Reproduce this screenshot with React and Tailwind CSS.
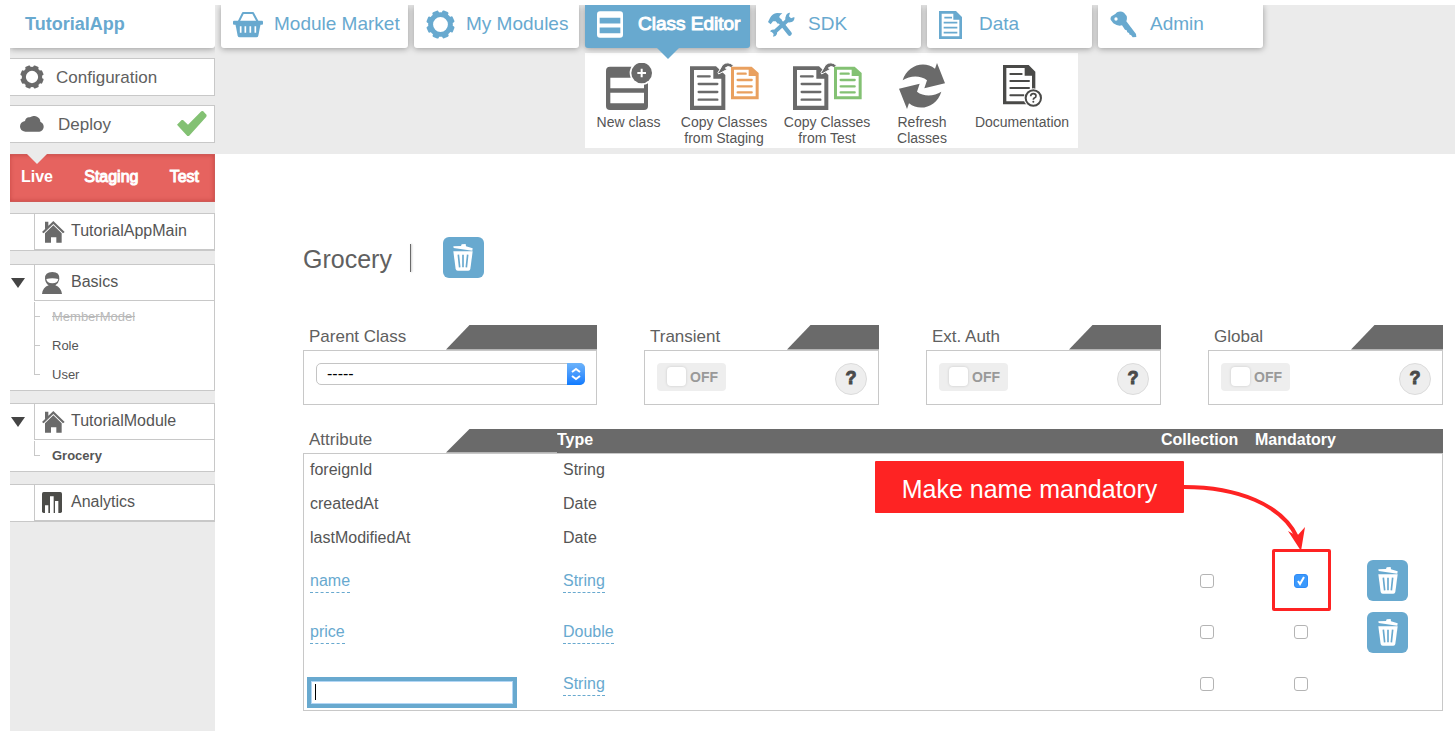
import { useState } from 'react';

const TABS = [
  { label: 'Module Market', icon: BasketIcon, width: 'w-[187px]', gap: 'gap-[11px]' },
  { label: 'My Modules', icon: GearIcon, width: 'w-[165px]', gap: 'gap-[11px]' },
  { label: 'Class Editor', icon: ClassIcon, width: 'w-[165px]', gap: 'gap-[15px]', active: true },
  { label: 'SDK', icon: ToolsIcon, width: 'w-[165px]', gap: 'gap-[13px]' },
  { label: 'Data', icon: DataIcon, width: 'w-[165px]', gap: 'gap-[17px]' },
  { label: 'Admin', icon: KeyIcon, width: 'w-[165px]', gap: 'gap-[13px]' },
];

const ACTIONS = [
  { lines: ['New class'], icon: NewClassIcon, width: 'w-[87px]' },
  { lines: ['Copy Classes', 'from Staging'], icon: CopyStagingIcon, width: 'w-[104px]' },
  { lines: ['Copy Classes', 'from Test'], icon: CopyTestIcon, width: 'w-[102px]' },
  { lines: ['Refresh', 'Classes'], icon: RefreshIcon, width: 'w-[88px]' },
  { lines: ['Documentation'], icon: DocumentationIcon, width: 'w-[112px]' },
];

const MODULES = [
  { name: 'TutorialAppMain', icon: HouseIcon, margin: 'mt-[11px]' },
  {
    name: 'Basics',
    icon: PersonIcon,
    margin: 'mt-[13px]',
    classes: [
      { name: 'MemberModel', style: 'text-[#b9b9b9] line-through' },
      { name: 'Role', style: 'text-[#555]' },
      { name: 'User', style: 'text-[#555]' },
    ],
  },
  {
    name: 'TutorialModule',
    icon: HouseIcon,
    margin: 'mt-3',
    classes: [{ name: 'Grocery', style: 'font-bold text-[#555]' }],
  },
  { name: 'Analytics', icon: AnalyticsIcon, margin: 'mt-3' },
];

const SYSTEM_ATTRIBUTES = [
  { name: 'foreignId', type: 'String' },
  { name: 'createdAt', type: 'Date' },
  { name: 'lastModifiedAt', type: 'Date' },
];

/* ---------- icons ---------- */

function BasketIcon() {
  return (
    <svg width="30" height="27" viewBox="0 0 90 81" fill="none" aria-hidden>
      <path d="M16 34 30 6h30l15 28" stroke="#68a9cf" strokeWidth="6" strokeLinejoin="round" />
      <rect y="29" width="90" height="12" rx="3" fill="#68a9cf" />
      <path d="M7 38h76l-7 36q-1 5-6 5H20q-5 0-6-5z" fill="#68a9cf" />
      <path d="M23 46v19M37 46v19M52 46v19M67 46v19" stroke="#fff" strokeWidth="5" />
    </svg>
  );
}

function Gear({ size, color }) {
  return (
    <svg width={size} height={size} viewBox="-44 -44 88 88" aria-hidden>
      {[22, 67, 112, 157, 202, 247, 292, 337].map((a) => (
        <rect key={a} x="-10" y="-43" width="20" height="16" rx="4" fill={color} transform={`rotate(${a})`} />
      ))}
      <circle r="30" fill="none" stroke={color} strokeWidth="15" />
    </svg>
  );
}

function GearIcon() {
  return <Gear size={29} color="#68a9cf" />;
}

function ClassIcon() {
  return (
    <svg width="26" height="27" viewBox="0 0 78 80" aria-hidden>
      <rect width="78" height="80" rx="9" fill="#fff" />
      <path d="M8 20h62v17H8zM8 49h62v17H8z" fill="#68a9cf" />
    </svg>
  );
}

function ToolsIcon() {
  return (
    <svg width="27" height="26" viewBox="0 0 81 78" fill="none" aria-hidden>
      <path d="M62 22 19 61" stroke="#68a9cf" strokeWidth="12" />
      <path d="M55 8Q60 1 66 2L63 13 69 19 79 15Q81 26 71 30 59 34 53 26 50 17 55 8z" fill="#68a9cf" />
      <path d="M6 58Q10 51 19 53 29 57 27 66 24 74 15 74L17 66 12 61z" fill="#68a9cf" />
      <path d="M34 26 65 65" stroke="#68a9cf" strokeWidth="13" strokeLinecap="round" />
      <path d="M0 30 6 18Q13 5 27 3L43 4 37 9Q32 13 35 18L42 24 30 36 23 28 15 28 8 37z" fill="#68a9cf" />
    </svg>
  );
}

function DataIcon() {
  return (
    <svg width="23" height="28" viewBox="0 0 69 84" aria-hidden>
      <path d="M0 0h51l18 18v66H0zM8 8v68h53V26H43V8z" fill="#68a9cf" fillRule="evenodd" />
      <path d="M16 20h23M14 35h41M14 50h41M14 65h41" stroke="#68a9cf" strokeWidth="5" />
    </svg>
  );
}

function KeyIcon() {
  return (
    <svg width="27" height="27" viewBox="0 0 81 81" aria-hidden>
      <path
        d="M21 4Q32-2 42 5L50 15Q52 23 49 31L78 69 79 78 68 79 63 72 59 71 57 66 52 64 50 58 45 56 36 43Q24 47 10 37L2 26Q0 17 7 14 15 12 21 4z"
        fill="#68a9cf"
      />
      <circle cx="18" cy="24" r="5" fill="#fff" />
    </svg>
  );
}

function NewClassIcon() {
  return (
    <svg width="46" height="47" viewBox="0 0 138 141" aria-hidden>
      <rect y="11" width="126" height="130" rx="12" fill="#6a6a6a" />
      <path d="M13 44h101v32H13zM13 89h101v32H13z" fill="#fff" />
      <circle cx="107" cy="30" r="36" fill="#fff" />
      <circle cx="107" cy="30" r="31" fill="#6a6a6a" />
      <path d="M107 17v26M94 30h26" stroke="#fff" strokeWidth="6" />
    </svg>
  );
}

function CopyIcon({ color }) {
  return (
    <svg width="69" height="48" viewBox="0 0 207 144" aria-hidden>
      <path d="M0 13h78l28 26v105H0zM12 24v107h82V50H70V24z" fill="#6a6a6a" fillRule="evenodd" />
      <path d="M24 43h35M26 66h56M26 90h56M26 113h56" stroke="#6a6a6a" strokeWidth="7" strokeLinecap="round" />
      <path d="M84 32 98 8Q114-4 130 10L124 17Q114 10 106 18L112 22 86 36z" fill="#6a6a6a" stroke="#fff" strokeWidth="3" />
      <path d="M123 14h62l21 19v79h-83zM132 23v80h65V42h-21V23z" fill={color} fillRule="evenodd" />
      <path d="M143 35h24M143 54h42M143 73h42M143 91h42" stroke={color} strokeWidth="7" strokeLinecap="round" />
    </svg>
  );
}

function CopyStagingIcon() {
  return <CopyIcon color="#e9a05f" />;
}

function CopyTestIcon() {
  return <CopyIcon color="#83c173" />;
}

function RefreshIcon() {
  const arrow = 'M11 52C24 8 74-10 108 17L114 0 138 61 76 76 84 52C64 36 32 38 11 52z';
  return (
    <svg width="46" height="46" viewBox="0 0 138 138" fill="#6a6a6a" aria-hidden>
      <path d={arrow} />
      <path d={arrow} transform="rotate(180 69 69)" />
    </svg>
  );
}

function DocumentationIcon() {
  return (
    <svg width="39" height="42" viewBox="0 0 117 126" aria-hidden>
      <path d="M0 0h77l20 20v98H0zM10 9v100h77V32H65V9z" fill="#4a4a48" fillRule="evenodd" />
      <path d="M22 27h34M22 48h56M22 69h56M22 91h40" stroke="#4a4a48" strokeWidth="6" strokeLinecap="round" />
      <circle cx="91" cy="99" r="29" fill="#fff" />
      <circle cx="91" cy="99" r="23" fill="#fff" stroke="#4a4a48" strokeWidth="6" />
      <path d="M83 94q0-8 8-8t8 7q0 4-5 6-3 2-3 5" fill="none" stroke="#4a4a48" strokeWidth="5" />
      <circle cx="91" cy="110" r="3" fill="#4a4a48" />
    </svg>
  );
}

function CloudIcon() {
  return (
    <svg width="24" height="16" viewBox="0 0 72 48" fill="#6a6a6a" aria-hidden>
      <path d="M16 47Q0 46 0 31 1 18 15 15 18 2 30 4 40-3 51 2 61 7 61 17 72 22 71 34 69 46 58 47z" />
    </svg>
  );
}

function CheckIcon() {
  return (
    <svg width="30" height="26" viewBox="0 0 90 78" fill="#83c173" aria-hidden>
      <path d="M0 41 14 27 18 27 33 41 73 1 78 0 89 12 88 17 36 75 31 75z" />
    </svg>
  );
}

function HouseIcon() {
  return (
    <svg width="23" height="22" viewBox="0 0 69 66" fill="#6a6a6a" aria-hidden>
      <path d="M9 2h10v13L9 24zM0 33 34 0 68 33 63 37 34 9 5 37z" />
      <path d="M34 13 59 37v28H43V49H27v16H9V37z" />
    </svg>
  );
}

function PersonIcon() {
  return (
    <svg width="20" height="22" viewBox="0 0 60 66" aria-hidden>
      <path d="M9 20Q8 0 31 0 54 0 52 22 50 34 40 40 57 46 60 66H0Q2 46 20 40 10 33 9 20z" fill="#6a6a6a" />
      <path d="M13 21Q31 17 49 21 47 34 31 34 15 34 13 21z" fill="#fff" />
    </svg>
  );
}

function AnalyticsIcon() {
  return (
    <svg width="20" height="21" viewBox="0 0 60 63" aria-hidden>
      <rect width="60" height="63" rx="5" fill="#4c4c49" />
      <path d="M9 40h10v23H9zM24 13h11v50H24zM39 27h10v36H39z" fill="#fff" />
    </svg>
  );
}

function TrashIcon() {
  return (
    <svg width="20" height="27" viewBox="0 0 60 81" aria-hidden>
      <path d="M1 7 24 6 26 1 38 0 39 7 59 13 58 20 2 12z" fill="#fff" />
      <path d="M1 22h58l-7 53q-1 5-6 5H14q-5 0-6-5z" fill="#fff" />
      <path d="M16 32l4 38M30 32v38M44 32l-4 38" stroke="#68a9cf" strokeWidth="5" />
    </svg>
  );
}

/* ---------- header ---------- */

function Tab({ tab }) {
  const Icon = tab.icon;
  return (
    <a
      href="#"
      className={`relative flex h-[43px] shrink-0 items-center rounded-b-[3px] pb-1 pl-3 text-[19px] shadow-[0_1px_6px_rgba(0,0,0,0.35)] ${tab.width} ${tab.gap} ${
        tab.active ? 'bg-[#68a9cf] text-white [-webkit-text-stroke:1px_white]' : 'bg-white text-[#68a9cf]'
      }`}
    >
      <Icon />
      <span className="whitespace-nowrap">{tab.label}</span>
      {tab.active && (
        <svg className="absolute top-[42px] left-[71px] z-10" width="24" height="12" aria-hidden>
          <path d="M0 0h24L12 12z" fill="#68a9cf" />
        </svg>
      )}
    </a>
  );
}

function Header() {
  return (
    <header className="h-[149px] overflow-hidden bg-[#ebebeb]">
      <nav className="relative z-10 flex gap-[6px] pl-[6px]">
        {TABS.map((tab) => (
          <Tab key={tab.label} tab={tab} />
        ))}
      </nav>
      <div className="mt-[5px] ml-[370px] flex h-[95px] w-fit bg-white">
        {ACTIONS.map(({ lines, icon: Icon, width }) => (
          <button key={lines.join(' ')} className={`flex flex-col items-center pt-[9px] ${width}`}>
            <span className="flex h-[52px] items-center pb-1">
              <Icon />
            </span>
            {lines.map((line) => (
              <span key={line} className="text-[14px] leading-[16px] text-[#555]">
                {line}
              </span>
            ))}
          </button>
        ))}
      </div>
    </header>
  );
}

/* ---------- sidebar ---------- */

function ModuleBox({ module }) {
  const Icon = module.icon;
  return (
    <section className={`border border-l-0 border-[#c8c8c8] bg-white ${module.margin}`}>
      <div className="flex">
        <div className="flex w-6 items-center pl-px">
          {module.classes && (
            <button aria-label={`Collapse ${module.name}`}>
              <svg width="14" height="10" aria-hidden>
                <path d="M0 0h14L7 10z" fill="#444" />
              </svg>
            </button>
          )}
        </div>
        <a href="#" className="flex h-9 flex-1 items-center border-b border-l border-[#c8c8c8] pl-[7px] text-[16px] text-[#555]">
          <span className="flex w-[29px]">
            <Icon />
          </span>
          <span className="pb-[2px]">{module.name}</span>
        </a>
      </div>
      {module.classes && (
        <ul className="py-px pl-6">
          {module.classes.map((cls, i) => (
            <li key={cls.name} className="flex h-[29px] items-center">
              <span className="flex w-[6px] flex-col self-stretch">
                <span className="h-1/2 border-b border-l border-[#c8c8c8]" />
                {i < module.classes.length - 1 && <span className="h-1/2 border-l border-[#c8c8c8]" />}
              </span>
              <a href="#" className={`pl-3 text-[13px] ${cls.style}`}>
                {cls.name}
              </a>
            </li>
          ))}
        </ul>
      )}
    </section>
  );
}

function Sidebar() {
  return (
    <aside className="w-[205px] shrink-0 overflow-hidden bg-[#ebebeb]">
      <a
        href="#"
        className="flex h-[43px] items-center rounded-br-[3px] bg-white pb-1 pl-[15px] text-[18px] font-bold text-[#68a9cf] shadow-[0_1px_6px_rgba(0,0,0,0.35)]"
      >
        TutorialApp
      </a>
      <a href="#" className="mt-[10px] flex h-[38px] items-center border border-l-0 border-[#c8c8c8] bg-white pl-[10px] text-[17px] text-[#606060]">
        <span className="flex w-9">
          <Gear size={24} color="#6a6a6a" />
        </span>
        <span className="pt-[2px]">Configuration</span>
      </a>
      <a href="#" className="mt-[9px] flex h-[38px] items-center border border-l-0 border-[#c8c8c8] bg-white pl-[10px] text-[17px] text-[#606060]">
        <span className="flex w-[38px]">
          <CloudIcon />
        </span>
        <span className="flex-1 pt-[2px]">Deploy</span>
        <span className="pr-[7px]">
          <CheckIcon />
        </span>
      </a>

      <nav className="relative mt-[11px] flex h-12 items-center justify-between border border-l-0 border-[#cf5a57] bg-[#e6635f] pr-[15px] pb-[3px] pl-[11px] text-[16px] text-white shadow-[inset_0_0_4px_rgba(120,0,0,0.3)]">
        <svg className="absolute -top-px left-[17px]" width="20" height="10" aria-hidden>
          <path d="M0 0h20L10 10z" fill="#ebebeb" />
        </svg>
        <a href="#" className="font-bold">Live</a>
        <a href="#" className="[-webkit-text-stroke:1px_white]">Staging</a>
        <a href="#" className="[-webkit-text-stroke:1px_white]">Test</a>
      </nav>

      {MODULES.map((module) => (
        <ModuleBox key={module.name} module={module} />
      ))}
    </aside>
  );
}

/* ---------- class editor ---------- */

function DeleteButton({ label }) {
  return (
    <button aria-label={label} className="flex size-[41px] items-center justify-center rounded-[6px] bg-[#68a9cf]">
      <TrashIcon />
    </button>
  );
}

function Card({ title, htmlFor, children }) {
  return (
    <section>
      <div className="flex h-[25px]">
        <label htmlFor={htmlFor} className="w-[143px] pl-[6px] text-[17px] leading-6 text-[#606060]">
          {title}
        </label>
        <div className="flex-1 bg-[#6a6a6a] [clip-path:polygon(24px_0,100%_0,100%_100%,0_100%)]" />
      </div>
      <div className="flex h-[55px] items-start justify-between border border-[#c8c8c8] pt-3 pr-[11px] pl-3">{children}</div>
    </section>
  );
}

function SwitchCard({ title, id }) {
  const [on, setOn] = useState(false);
  return (
    <Card title={title} htmlFor={id}>
      <div className="flex h-7 w-[69px] items-center gap-1 rounded-[4px] bg-[#eee] pl-[10px]">
        <input
          id={id}
          type="checkbox"
          checked={on}
          onChange={() => setOn(!on)}
          className="size-[19px] appearance-none rounded-[4px] bg-white shadow-[0_0_3px_rgba(0,0,0,0.15)]"
        />
        <span className="text-[14px] leading-7 font-bold text-[#999]">{on ? 'ON' : 'OFF'}</span>
      </div>
      <button
        aria-label={`Help on ${title}`}
        className="flex size-8 items-center justify-center rounded-full border border-[#dcdcdc] bg-[#eee] text-[18px] font-bold text-[#4a4a4a] [-webkit-text-stroke:1px_#4a4a4a]"
      >
        ?
      </button>
    </Card>
  );
}

function Tick({ label, defaultChecked }) {
  return (
    <span className="relative flex justify-center">
      <input
        type="checkbox"
        aria-label={label}
        defaultChecked={defaultChecked}
        className="peer size-[14px] appearance-none rounded-[3px] border border-[#b4b4b4] bg-white checked:border-[#2f8bf7] checked:bg-[#3b99fc]"
      />
      <svg className="pointer-events-none absolute top-0 hidden peer-checked:block" width="14" height="14" aria-hidden>
        <path d="M4 7l2 3 4-7" fill="none" stroke="#fff" strokeWidth="2" />
      </svg>
    </span>
  );
}

function Editable({ children }) {
  return (
    <a href="#" className="inline-block border-b border-dashed border-[#68a9cf] leading-[22px] text-[#68a9cf]">
      {children}
    </a>
  );
}

// Text box for the next attribute; the caret is shown while the box is empty
function NewAttributeInput() {
  const [name, setName] = useState('');
  return (
    <div className="mb-[2px] ml-[3px] flex h-[31px] w-[210px] items-center border-4 border-[#68a9cf] bg-white pl-1 shadow-[inset_0_0_0_1px_#b3d6f5]">
      {name === '' && <span className="h-4 w-px bg-black" />}
      <input
        aria-label="New attribute name"
        value={name}
        onChange={(e) => setName(e.target.value)}
        className="min-w-0 flex-1 bg-transparent outline-none"
      />
    </div>
  );
}

function AttributeTable() {
  return (
    <table className="w-full table-fixed border-separate border-spacing-0 text-left text-[16px] text-[#555]">
      <colgroup>
        <col className="w-[254px]" />
        <col />
        <col className="w-[92px]" />
        <col className="w-[96px]" />
        <col className="w-[94px]" />
      </colgroup>
      <thead>
        <tr className="h-6 align-top leading-[21px] text-white">
          <th className="p-0 font-normal">
            <div className="flex h-6">
              <span className="w-[143px] pl-[6px] text-[17px] text-[#606060]">Attribute</span>
              <span className="flex-1 bg-[#6a6a6a] [clip-path:polygon(24px_0,100%_0,100%_100%,0_100%)]" />
            </div>
          </th>
          <th className="bg-[#6a6a6a] p-0">Type</th>
          <th className="bg-[#6a6a6a] p-0">Collection</th>
          <th className="bg-[#6a6a6a] p-0 pl-[2px]">Mandatory</th>
          <th className="bg-[#6a6a6a] p-0" aria-label="Delete" />
        </tr>
      </thead>
      <tbody className="[&_td]:p-0 [&_td:first-child]:border-l [&_td:first-child]:border-[#c8c8c8] [&_td:last-child]:border-r [&_td:last-child]:border-[#c8c8c8] [&_tr:first-child_td]:border-t [&_tr:first-child_td]:border-[#c8c8c8] [&_tr:last-child_td]:border-b [&_tr:last-child_td]:border-[#c8c8c8]">
        {SYSTEM_ATTRIBUTES.map((attr) => (
          <tr key={attr.name} className="h-[34px]">
            <td><span className="pl-[6px]">{attr.name}</span></td>
            <td><span className="pl-[6px]">{attr.type}</span></td>
            <td />
            <td />
            <td />
          </tr>
        ))}
        <tr className="h-[52px]">
          <td><div className="pl-[6px]"><Editable>name</Editable></div></td>
          <td><div className="pl-[6px]"><Editable>String</Editable></div></td>
          <td><Tick label="name is a collection" /></td>
          <td><Tick label="name is mandatory" defaultChecked /></td>
          <td><div className="pl-[18px]"><DeleteButton label="Delete name" /></div></td>
        </tr>
        <tr className="h-[51px]">
          <td><div className="pl-[6px]"><Editable>price</Editable></div></td>
          <td><div className="pl-[6px]"><Editable>Double</Editable></div></td>
          <td><Tick label="price is a collection" /></td>
          <td><Tick label="price is mandatory" /></td>
          <td><div className="pl-[18px]"><DeleteButton label="Delete price" /></div></td>
        </tr>
        <tr className="h-[53px]">
          <td className="align-bottom"><NewAttributeInput /></td>
          <td><div className="pl-[6px]"><Editable>String</Editable></div></td>
          <td><Tick label="New attribute is a collection" /></td>
          <td><Tick label="New attribute is mandatory" /></td>
          <td />
        </tr>
      </tbody>
    </table>
  );
}

// Tutorial hint laid over the table, anchored to the Mandatory column
function Callout() {
  return (
    <div className="pointer-events-none absolute top-8 right-[112px] h-[150px] w-[456px]">
      <p className="flex h-[52px] w-[309px] items-center justify-center rounded-[1px] bg-[#fe2323] pt-[6px] text-[25px] whitespace-nowrap text-white">
        Make name mandatory
      </p>
      <svg className="absolute top-0 left-[309px]" width="147" height="90" aria-hidden>
        <path d="M0 26C54 26 98 44 113 76" fill="none" stroke="#fe2323" strokeWidth="4" />
        <path d="M117 90 104 70 113 75 121 66z" fill="#fe2323" />
      </svg>
      <div className="absolute right-0 bottom-0 h-[62px] w-[59px] rounded-[2px] border-3 border-[#fe2323]" />
    </div>
  );
}

export default function App() {
  return (
    <div className="flex min-h-screen bg-white pt-[5px] pb-[7px] pl-[10px] font-['Liberation_Sans',Arial,sans-serif]">
      <Sidebar />
      <div className="min-w-0 flex-1">
        <Header />
        <main className="pt-[83px] pr-3 pl-[88px]">
          <div className="flex items-center">
            <h1 className="pt-1 text-[25px] text-[#606060]">Grocery</h1>
            <span className="mr-8 ml-[18px] h-7 w-px bg-[#6a6a6a] shadow-[1px_0_2px_#bbb]" />
            <DeleteButton label="Delete Grocery" />
          </div>

          <div className="mt-[46px] grid grid-cols-[294fr_235fr_235fr_235fr] gap-[47px]">
            <Card title="Parent Class" htmlFor="parent-class">
              <div className="relative flex-1">
                <select
                  id="parent-class"
                  className="block h-[22px] w-full appearance-none rounded-[5px] border border-[#c4c4c4] bg-white pl-[10px] text-[16px] leading-5 text-black"
                >
                  <option>-----</option>
                </select>
                <span className="pointer-events-none absolute top-0 right-0 flex h-[22px] w-[18px] items-center justify-center rounded-r-[5px] bg-linear-to-b from-[#6cb3fa] to-[#0a7bff]">
                  <svg width="10" height="14" fill="none" stroke="#fff" strokeWidth="2" aria-hidden>
                    <path d="M1 5l4-3 4 3M1 9l4 3 4-3" />
                  </svg>
                </span>
              </div>
            </Card>
            <SwitchCard title="Transient" id="transient" />
            <SwitchCard title="Ext. Auth" id="ext-auth" />
            <SwitchCard title="Global" id="global" />
          </div>

          <div className="relative mt-6">
            <AttributeTable />
            <Callout />
          </div>
        </main>
      </div>
    </div>
  );
}
